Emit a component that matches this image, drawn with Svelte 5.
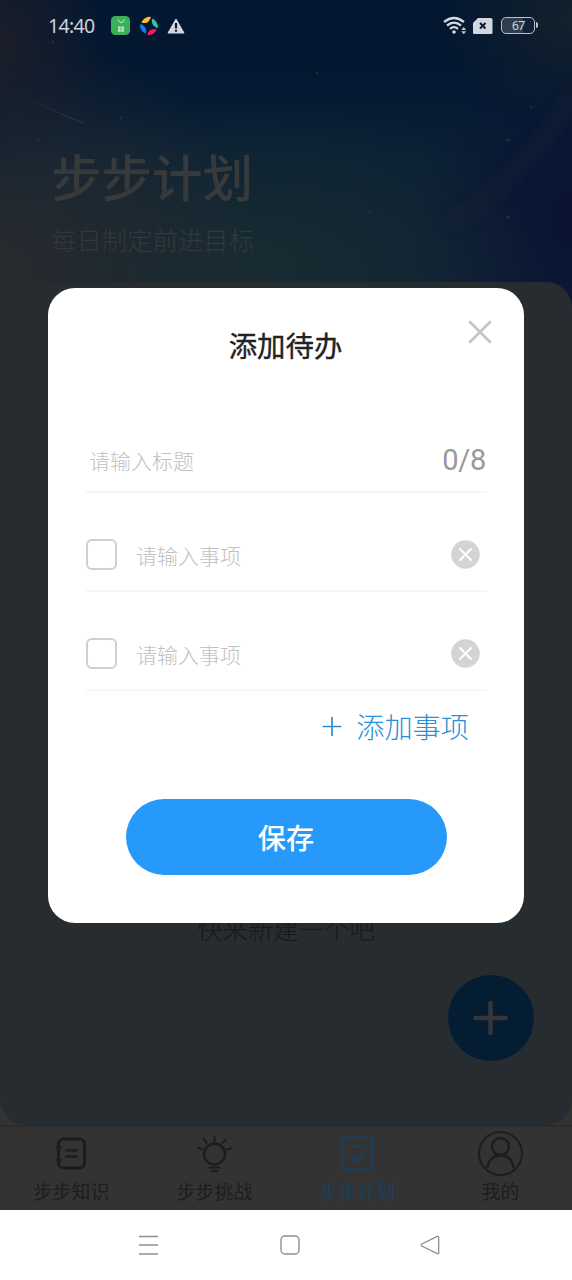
<script>
	let title = '';
	let done = [false, false];
	let items = ['', ''];
	let showModal = true;
	const tabs = [
		{ name: '步步知识', icon: 'book' },
		{ name: '步步挑战', icon: 'bulb' },
		{ name: '步步计划', icon: 'plan' },
		{ name: '我的', icon: 'me' }
	];
	let current = 'plan';

	function addItem() {
		items = [...items, ''];
		done = [...done, false];
	}
	function removeItem(index) {
		items = items.filter((_, i) => i !== index);
		done = done.filter((_, i) => i !== index);
	}
	const closeModal = () => (showModal = false);
</script>

<div class="phone">
	<header>
		<svg class="sky" viewBox="0 0 572 310" preserveAspectRatio="none">
			<defs>
				<linearGradient id="trail">
					<stop offset="0" stop-color="#2e3833" stop-opacity="0" />
					<stop offset="1" stop-color="#303b33" />
				</linearGradient>
				<filter id="soft" x="-50%" y="-50%" width="200%" height="200%">
					<feGaussianBlur stdDeviation="7" />
				</filter>
			</defs>
			<path d="M450 225Q510 190 575 95" fill="none" stroke="#1b2136" stroke-width="12" opacity=".5" filter="url(#soft)" />
			<path d="M18 95L83 123" stroke="url(#trail)" stroke-width="1.3" />
			<g fill="#1f3140">
				<circle cx="38" cy="140" r="1.6" />
				<circle cx="121" cy="118" r="1.3" />
				<circle cx="53" cy="42" r="1.2" />
				<circle cx="317" cy="73" r="1.2" />
				<circle cx="508" cy="140" r="1.6" />
				<circle cx="508" cy="217" r="1.6" />
				<circle cx="370" cy="212" r="1.3" />
				<circle cx="190" cy="268" r="1.4" />
				<circle cx="531" cy="107" r="1.2" />
			</g>
		</svg>
		<div class="status">
			<span class="time">14:40</span>
			<svg class="app-icon" width="19" height="19" viewBox="0 0 19 19">
				<rect width="19" height="19" rx="4.5" fill="#38b159" />
				<path d="M6.8 3.3Q10.2 10 13.6 3.3" fill="none" stroke="#dcebd9" stroke-width="1" />
				<path d="M7 10.400h2.600v2.300H7zM10.300 10.400h2.600v2.300h-2.600zM7 13.300h2.600v2.400H7zM10.300 13.300h2.600v2.400h-2.600z" fill="#c9e6cd" />
			</svg>
			<svg class="swirl" width="20" height="20" viewBox="0 0 20 20">
				<path d="M2.300 6.500Q5.500 .5 11.500 .8Q12.500 2 9.500 5.500Q7.500 8 2.300 6.500z" fill="#fdbd24" />
				<path d="M13 2.500Q18.500 4.500 19 11Q18.500 13 15.500 10.500Q12 8 13 2.500z" fill="#35c0a2" />
				<path d="M17.800 13.500Q15 19.200 9 19.200Q7.500 18 10.500 14.800Q13 12 17.800 13.500z" fill="#f51c5b" />
				<path d="M7 17.500Q1.300 15.500 1 9.500Q1.500 7 4.500 9.800Q8 12.500 7 17.500z" fill="#127bfa" />
			</svg>
			<svg width="18" height="16" viewBox="0 0 18 16">
				<path d="M9 1L17 15H1z" fill="#d3d7df" stroke="#d3d7df" stroke-width="1" stroke-linejoin="round" />
				<path d="M9 5v5.500M9 11.800v2" stroke="#10182b" stroke-width="2.200" />
			</svg>
			<span class="grow"></span>
			<svg class="wifi" width="24" height="20" viewBox="0 0 24 20">
				<g fill="none" stroke="#d3d7df" stroke-width="2.300">
					<path d="M1 6Q11 -2 21 6" />
					<path d="M4 9.500Q11 3.800 18 9.500" />
					<path d="M7 12.800Q11 9.500 15 12.800" />
				</g>
				<circle cx="11" cy="16" r="1.800" fill="#d3d7df" />
				<path d="M18.200 14L20.700 11L23.200 14zM18.200 15.300h5L20.700 18.300z" fill="#bfc5ce" />
			</svg>
			<svg class="sim" width="20" height="16" viewBox="0 0 20 16">
				<path d="M5 0H18Q19.500 0 19.500 1.500V14.500Q19.500 16 18 16H1.500Q0 16 0 14.500V5z" fill="#d3d7df" />
				<path d="M7 5L12.500 10.500M12.500 5L7 10.500" stroke="#10182b" stroke-width="2" />
			</svg>
			<div class="battery">67</div>
		</div>
		<h1>步步计划</h1>
		<p>每日制定前进目标</p>
	</header>

	<main>
		<div class="empty">快来新建一个吧</div>
		<button class="fab" aria-label="新建" on:click={() => (showModal = true)}>
			<svg width="36" height="36" viewBox="0 0 36 36">
				<path d="M2.500 18H32.500M17.500 3V33" stroke="#343638" stroke-width="4.500" stroke-linecap="round" />
			</svg>
		</button>
	</main>

	<nav>
		{#each tabs as tab}
			<button class="tab" class:active={current === tab.icon} on:click={() => (current = tab.icon)}>
				<svg width="46" height="46" viewBox="0 0 46 46" fill="none" stroke="currentColor" stroke-width="2.500" stroke-linecap="round">
					{#if tab.icon === 'book'}
						<rect x="9.500" y="8" width="26" height="29" rx="5" stroke-width="3" />
						<path d="M17.500 19.500H28M17.500 25.500H28M7.500 16.500h4M7.500 29h4" stroke-width="2.400" />
					{:else if tab.icon === 'bulb'}
						<circle cx="22.500" cy="23" r="10.500" />
						<path d="M22.500 5.500V10M11.500 7.500L14.500 11.500M33.500 9L30.500 12M6 17L10 18M39 17.500L35 18.500M17.500 36.500H27.500M19.500 40H25.500" stroke-width="2.200" />
					{:else if tab.icon === 'plan'}
						<rect x="7.500" y="6.500" width="29.500" height="32" rx="3" stroke-width="2.200" />
						<path d="M16.500 15.500H28" />
						<path d="M16.500 26L21 31L29 23" stroke-linejoin="round" />
					{:else}
						<circle cx="22.500" cy="22.500" r="21.500" stroke-width="2" />
						<circle cx="22.500" cy="15.500" r="8.500" />
						<path d="M9.500 36Q11.500 24.500 22.500 24.500T35.500 36" />
					{/if}
				</svg>
				<span>{tab.name}</span>
			</button>
		{/each}
	</nav>

	<footer>
		<svg width="20" height="20" viewBox="0 0 20 20">
			<path d="M0 1.500H19M0 10H19M0 19H19" stroke="#8f8f8f" stroke-width="1.400" />
		</svg>
		<svg width="20" height="20" viewBox="0 0 20 20">
			<rect x="1" y="1" width="18" height="18" rx="4" fill="none" stroke="#8f8f8f" stroke-width="1.400" />
		</svg>
		<svg width="20" height="20" viewBox="0 0 20 20">
			<path d="M17.300 1.300L1.800 9Q.6 10 1.800 11L17.300 18.700Q18.700 19 18.700 17.500V2.500Q18.700 1 17.300 1.300z" fill="none" stroke="#8f8f8f" stroke-width="1.300" />
		</svg>
	</footer>

	{#if showModal}
		<div class="modal">
			<div class="modal-head">
				<h2>添加待办</h2>
				<button class="close" aria-label="关闭" on:click={closeModal}>
					<svg width="24" height="24" viewBox="0 0 24 24">
						<path d="M2 2L22 22M22 2L2 22" stroke="#c4c4c4" stroke-width="2.700" stroke-linecap="round" />
					</svg>
				</button>
			</div>
			<div class="row title-row">
				<input placeholder="请输入标题" maxlength="8" bind:value={title} />
				<span class="count">{title.length}/8</span>
			</div>
			{#each items as item, index}
				<div class="row">
					<input type="checkbox" bind:checked={done[index]} />
					<input placeholder="请输入事项" bind:value={items[index]} />
					<button class="remove" aria-label="删除" on:click={() => removeItem(index)}>
						<svg width="29" height="29" viewBox="0 0 29 29">
							<circle cx="14.500" cy="14.500" r="14.300" fill="#d4d4d4" />
							<path d="M9 9L20 20M20 9L9 20" stroke="#fff" stroke-width="2" stroke-linecap="round" />
						</svg>
					</button>
				</div>
			{/each}
			<button class="add" on:click={addItem}>
				<svg width="20" height="20" viewBox="0 0 20 20">
					<path d="M.5 10.500H19.500M10 1V20" stroke="#2a8fd6" stroke-width="1.700" />
				</svg>
				添加事项
			</button>
			<button class="save" on:click={closeModal}>保存</button>
		</div>
	{/if}
</div>

<style>
	:global(body) {
		margin: 0;
		background: #333;
	}
	.phone {
		position: relative;
		display: flex;
		flex-direction: column;
		width: 572px;
		height: 1280px;
		overflow: hidden;
		font-family: 'Noto Sans CJK SC', sans-serif;
		background: #333;
	}
	button {
		padding: 0;
		border: 0;
		background: none;
		font-family: inherit;
		cursor: pointer;
	}
	svg {
		display: block;
		flex: none;
	}
	header {
		position: relative;
		box-sizing: border-box;
		height: 310px;
		margin-bottom: -28px;
		flex: none;
		background:
			radial-gradient(ellipse 110px 130px at 0 40px, #1b1e29 0%, rgba(27, 30, 41, 0) 100%),
			radial-gradient(ellipse 260px 240px at 0 270px, #292b2e 0%, rgba(41, 43, 46, 0) 100%),
			radial-gradient(ellipse 300px 170px at 250px 270px, #182c31 0%, rgba(24, 44, 49, 0) 100%),
			radial-gradient(ellipse 130px 100px at 572px 20px, #13212c 0%, rgba(19, 33, 44, 0) 100%),
			radial-gradient(ellipse 160px 200px at 572px 220px, #0a1233 0%, rgba(10, 18, 51, 0) 100%),
			linear-gradient(#031731 0%, #031731 20%, #0a2035 50%, #0f2036 100%);
	}
	.sky {
		position: absolute;
		inset: 0;
		width: 100%;
		height: 100%;
	}
	.status {
		position: relative;
		display: flex;
		align-items: center;
		height: 51px;
		padding: 0 35px 0 48px;
	}
	.time {
		width: 63px;
		font-family: 'Noto Sans', sans-serif;
		font-size: 19.5px;
		letter-spacing: -0.7px;
		color: #ccd1dc;
	}
	.app-icon {
		margin-right: 9px;
	}
	.swirl {
		margin-right: 8px;
	}
	.grow {
		flex: 1;
	}
	.wifi {
		margin-right: 6px;
	}
	.sim {
		margin-right: 8px;
	}
	.battery {
		position: relative;
		box-sizing: border-box;
		width: 34px;
		height: 17px;
		margin-right: 2px;
		border: 1.5px solid #b9c0ca;
		border-radius: 5px;
		background: linear-gradient(90deg, #303d4f 67%, #10213a 67%);
		font-family: Roboto, sans-serif;
		font-size: 13px;
		line-height: 16px;
		letter-spacing: -1px;
		text-align: center;
		color: #ccd1d9;
	}
	.battery::after {
		content: '';
		position: absolute;
		right: -4px;
		top: 4px;
		width: 2px;
		height: 6px;
		border-radius: 0 2px 2px 0;
		background: #b9c0ca;
	}
	h1 {
		position: relative;
		margin: 94px 0 0 51px;
		font-size: 50.5px;
		font-weight: 500;
		line-height: 60px;
		color: #38393b;
	}
	header p {
		position: relative;
		margin: 18px 0 0 51px;
		font-size: 25.4px;
		font-weight: 300;
		line-height: 32px;
		color: #34383c;
	}
	main {
		position: relative;
		display: flex;
		flex-direction: column;
		justify-content: flex-end;
		height: 843px;
		flex: none;
		border-radius: 26px;
		background: #272c30;
	}
	.empty {
		text-align: center;
		font-size: 25.4px;
		font-weight: 300;
		line-height: 32px;
		color: #17191b;
	}
	.fab {
		display: grid;
		place-items: center;
		align-self: flex-end;
		width: 86px;
		height: 86px;
		margin: 31px 38px 64px 0;
		border-radius: 50%;
		background: #051d33;
	}
	nav {
		display: flex;
		box-sizing: border-box;
		height: 85px;
		flex: none;
		border-top: 2px solid #2b2b2b;
		background: #333;
	}
	.tab {
		display: flex;
		flex-direction: column;
		align-items: center;
		flex: 1;
		padding-top: 4px;
		font-size: 19px;
		line-height: 28px;
		color: #1d1d1d;
	}
	.tab.active {
		color: #173f60;
	}
	footer {
		display: flex;
		align-items: center;
		justify-content: space-between;
		flex: 1;
		padding: 0 132px 0 139px;
		background: #fff;
	}
	.modal {
		position: absolute;
		top: 288px;
		left: 48px;
		box-sizing: border-box;
		display: flex;
		flex-direction: column;
		width: 476px;
		height: 635px;
		padding: 0 37px 0 38px;
		border-radius: 27px;
		background: #fff;
	}
	.modal-head {
		position: relative;
		height: 104px;
		padding-top: 37px;
		box-sizing: border-box;
	}
	h2 {
		margin: 0 2px 0 0;
		font-size: 28.4px;
		font-weight: 400;
		line-height: 40px;
		text-align: center;
		color: #222;
		-webkit-text-stroke: 0.35px #222;
	}
	.close {
		position: absolute;
		top: 32px;
		right: -5px;
	}
	.row {
		display: flex;
		align-items: center;
		box-sizing: border-box;
		height: 99px;
		padding: 26px 7px 0 0;
		border-bottom: 2px solid #f6f6f6;
	}
	.title-row {
		height: 101px;
		padding: 36px 1px 0 3px;
	}
	input {
		flex: 1;
		min-width: 0;
		padding: 0;
		border: 0;
		outline: 0;
		font-family: inherit;
		font-size: 21px;
		font-weight: 300;
		color: #333;
	}
	input::placeholder {
		color: #c2c2c2;
		opacity: 1;
	}
	input[type='checkbox'] {
		appearance: none;
		flex: none;
		box-sizing: border-box;
		width: 31px;
		height: 31px;
		margin: 0 19px 0 0;
		border: 2px solid #d0d0d0;
		border-radius: 6px;
	}
	input[type='checkbox']:checked {
		background: #2699fb;
	}
	.count {
		font-family: Roboto, sans-serif;
		font-size: 29px;
		letter-spacing: -0.3px;
		color: #999;
	}
	.add {
		display: flex;
		align-items: center;
		align-self: flex-end;
		gap: 14px;
		height: 40px;
		margin: 15px 18px 0 0;
		font-size: 28.2px;
		font-weight: 300;
		line-height: 40px;
		color: #2a8fd6;
	}
	.save {
		align-self: center;
		width: 321px;
		height: 76px;
		margin: 53px 1px 0 0;
		border-radius: 38px;
		background: #2699fb;
		font-size: 28.2px;
		font-weight: 500;
		line-height: 74px;
		color: #fff;
	}
</style>
